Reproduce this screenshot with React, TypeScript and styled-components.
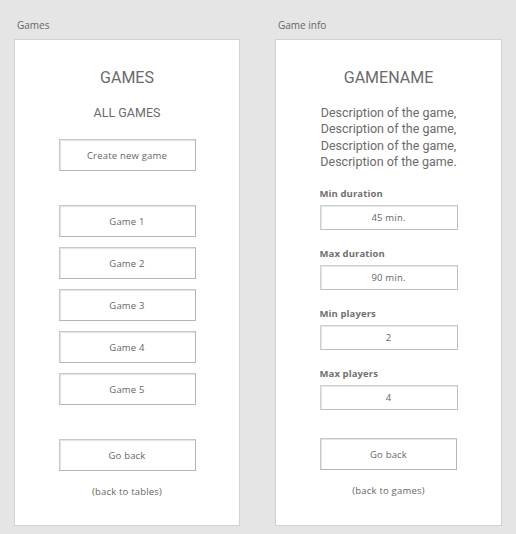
import React from "react";
import styled, { createGlobalStyle } from "styled-components";

const Global = createGlobalStyle`
  html, body { margin: 0; padding: 0; background: #e5e5e5; }
  body { font-family: "Open Sans", "Liberation Sans", sans-serif; }
`;

const Page = styled.div`
  display: flex;
  gap: 35px;
  padding: 0 14px 0 14px;
  height: 534px;
  box-sizing: border-box;
`;

const Column = styled.div<{ $w: number }>`
  display: flex;
  flex-direction: column;
  width: ${(p) => p.$w}px;
`;

const ColumnLabel = styled.div`
  font-family: "Open Sans", sans-serif;
  font-size: 10px;
  line-height: 14px;
  color: #666;
  padding: 18px 0 0 3px;
  height: 21px;
`;

const Panel = styled.div`
  background: #fff;
  border: 1px solid #d2d2d2;
  height: 487px;
  box-sizing: border-box;
  display: flex;
  flex-direction: column;
  align-items: center;
  padding-top: 28px;
`;

const Title = styled.div`
  font-family: Roboto, "Liberation Sans", sans-serif;
  font-size: 16px;
  line-height: 20px;
  color: #6b6b6b;
`;

const Subtitle = styled.div`
  font-family: Roboto, "Liberation Sans", sans-serif;
  font-size: 12.5px;
  line-height: 16px;
  color: #6b6b6b;
  margin-top: 17px;
`;

const Description = styled.div`
  font-family: Roboto, "Liberation Sans", sans-serif;
  font-size: 12.5px;
  line-height: 16.33px;
  color: #6b6b6b;
  margin-top: 17px;
  text-align: center;
  margin-bottom: 17px;
`;

const Button = styled.div<{ $mt: number; $w?: number }>`
  width: ${(p) => p.$w ?? 137}px;
  height: 32px;
  box-sizing: border-box;
  border: 1px solid #b5b5b5;
  border-left-color: #c8c8c8;
  border-top-color: #c8c8c8;
  box-shadow: inset 1px 1px 0 #e4e4e4;
  margin-top: ${(p) => p.$mt}px;
  display: flex;
  align-items: center;
  justify-content: center;
  font-family: "Open Sans", sans-serif;
  font-size: 9.5px;
  color: #666;
  letter-spacing: 0.2px;
`;

const Note = styled.div`
  font-family: "Open Sans", sans-serif;
  font-size: 9.5px;
  line-height: 14px;
  color: #666;
  margin-top: 14px;
  letter-spacing: 0.2px;
`;

const Field = styled.div<{ $mt: number }>`
  width: 138px;
  margin-top: ${(p) => p.$mt}px;
  display: flex;
  flex-direction: column;
  gap: 4px;
`;

const FieldLabel = styled.div`
  font-family: "Open Sans", sans-serif;
  font-weight: 700;
  font-size: 9.5px;
  line-height: 14px;
  height: 14px;
  color: #707070;
  letter-spacing: 0.1px;
`;

const Input = styled.div`
  height: 25px;
  box-sizing: border-box;
  border: 1px solid #c0c0c0;
  border-left-color: #d0d0d0;
  border-top-color: #d0d0d0;
  box-shadow: inset 1px 1px 0 #e6e6e6;
  display: flex;
  align-items: center;
  justify-content: center;
  font-family: "Open Sans", sans-serif;
  font-size: 9.5px;
  color: #666;
  letter-spacing: 0.2px;
`;

const fields = [
  ["Min duration", "45 min."],
  ["Max duration", "90 min."],
  ["Min players", "2"],
  ["Max players", "4"],
];

export default function App() {
  return (
    <>
      <Global />
      <Page>
        <Column $w={226}>
          <ColumnLabel>Games</ColumnLabel>
          <Panel>
            <Title>GAMES</Title>
            <Subtitle>ALL GAMES</Subtitle>
            <Button $mt={18}>Create new game</Button>
            {[1, 2, 3, 4, 5].map((n) => (
              <Button key={n} $mt={n === 1 ? 34 : 10}>
                Game {n}
              </Button>
            ))}
            <Button $mt={34}>Go back</Button>
            <Note>(back to tables)</Note>
          </Panel>
        </Column>
        <Column $w={227}>
          <ColumnLabel>Game info</ColumnLabel>
          <Panel>
            <Title>GAMENAME</Title>
            <Description>
              Description of the game,
              <br />
              Description of the game,
              <br />
              Description of the game,
              <br />
              Description of the game.
            </Description>
            {fields.map(([label, value], i) => (
              <Field key={label} $mt={i === 0 ? 0 : 17}>
                <FieldLabel>{label}</FieldLabel>
                <Input>{value}</Input>
              </Field>
            ))}
            <Button $mt={28}>Go back</Button>
            <Note>(back to games)</Note>
          </Panel>
        </Column>
      </Page>
    </>
  );
}
